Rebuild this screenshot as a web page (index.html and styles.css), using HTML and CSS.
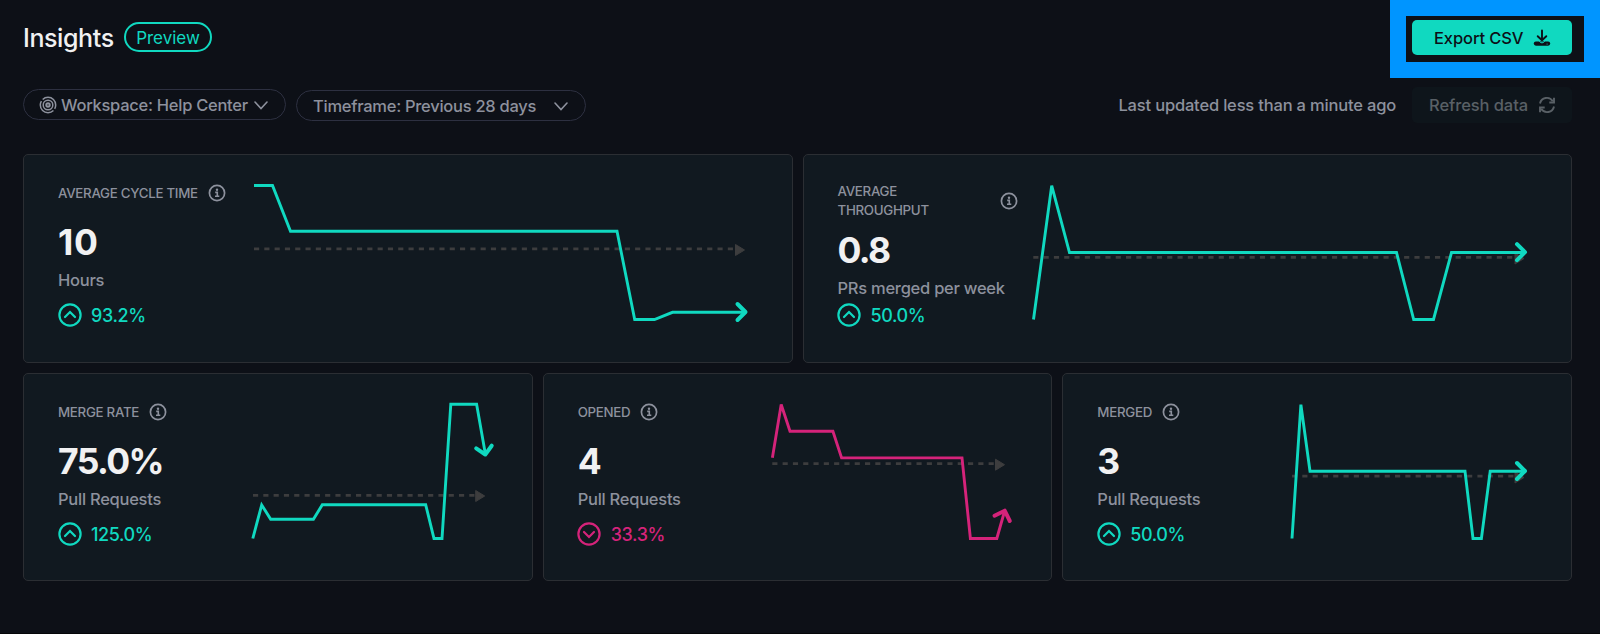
FILE: index.html
```html
<!DOCTYPE html>
<html lang="en">
<head>
<meta charset="utf-8">
<title>Insights</title>
<link rel="stylesheet" href="styles.css">
</head>
<body>
<svg class="defs" width="0" height="0" aria-hidden="true">
  <symbol id="info" viewBox="0 0 18 18"><circle cx="9" cy="9" r="7.6" fill="none" stroke="currentColor" stroke-width="1.7"/><path d="M7.200 8.400h2.100v3.600M7 12.300h4.300" fill="none" stroke="currentColor" stroke-width="1.600"/><circle cx="9" cy="5.700" r="1.200" fill="currentColor"/></symbol>
  <symbol id="up" viewBox="0 0 24 24"><circle cx="12" cy="12" r="10.6" fill="none" stroke="currentColor" stroke-width="2.2"/><path d="M7 14l5-5 5 5" fill="none" stroke="currentColor" stroke-width="2.2" stroke-linecap="round"/></symbol>
  <symbol id="down" viewBox="0 0 24 24"><circle cx="12" cy="12" r="10.6" fill="none" stroke="currentColor" stroke-width="2.2"/><path d="M7 10l5 5 5-5" fill="none" stroke="currentColor" stroke-width="2.2" stroke-linecap="round"/></symbol>
  <symbol id="chevron" viewBox="0 0 14 9"><path d="M1 1l6 6.500L13 1" fill="none" stroke="currentColor" stroke-width="1.600" stroke-linecap="round"/></symbol>
</svg>
<main class="page">
  <header class="header">
    <h1 class="title">Insights</h1>
    <span class="preview">Preview</span>
    <div class="highlight">
      <button class="btn export">Export CSV
        <svg width="18" height="18" viewBox="0 0 18 18" fill="none" stroke="currentColor" stroke-width="1.9" stroke-linecap="round" stroke-linejoin="round"><path d="M9 1.500v9.500M4.700 7.200L9 11.200l4.300-4"/><path d="M2.900 14.600h12.200" stroke-width="4.200"/><path d="M6.500 12.600a2.700 2 0 0 0 5 0" stroke="#10d9c0" stroke-width="1"/><path d="M14 15.100h.2" stroke="#10d9c0" stroke-width=".9"/></svg>
      </button>
    </div>
  </header>
  <section class="filters">
    <button class="pill workspace">
      <svg width="18" height="18" viewBox="0 0 18 18" fill="none" stroke="currentColor" stroke-width="1.500"><circle cx="9" cy="9" r="7.700" stroke-dasharray="22.200 2" stroke-dashoffset="-6"/><circle cx="9" cy="9" r="4.800"/><circle cx="9" cy="9" r="1.700" stroke-width="2"/></svg>
      <span>Workspace: Help Center</span>
      <svg class="chev" width="14" height="9"><use href="#chevron"/></svg>
    </button>
    <button class="pill timeframe"><span>Timeframe: Previous 28 days</span><svg class="chev" width="14" height="9"><use href="#chevron"/></svg></button>
    <span class="updated">Last updated less than a minute ago</span>
    <button class="btn refresh">Refresh data
      <svg width="18" height="18" viewBox="0 0 18 18" fill="none" stroke="currentColor" stroke-width="1.900"><path d="M2 7.500a7 7 0 0 1 12.800-2.300M16 10.500a7 7 0 0 1-12.800 2.300"/><path d="M16 1.800v4.700h-4.700M2 16.200v-4.700h4.700"/></svg>
    </button>
  </section>
  <section class="row two">
    <article class="card">
      <div class="stat">
        <div class="label"><span>AVERAGE CYCLE TIME</span><svg width="18" height="18"><use href="#info"/></svg></div>
        <div class="value whole">10</div><div class="unit">Hours</div>
        <div class="trend up"><svg width="24" height="24"><use href="#up"/></svg><span>93.2%</span></div>
      </div>
      <svg class="chart" viewBox="252 180 496 144" width="496" height="144">
        <path class="base" d="M254 248.800H735"/><path class="tip" d="M735.500 244.500v11l9-5.500z"/>
        <path class="line" d="M254 185.500H272.500L290.500 231.200H617L634.700 319.500H654.500L672.500 312.300H745"/><path class="head" d="M737.500 304l8 8-8 8"/>
      </svg>
    </article>
    <article class="card">
      <div class="stat wrap">
        <div class="label"><span>AVERAGE THROUGHPUT</span><svg width="18" height="18"><use href="#info"/></svg></div>
        <div class="value">0.8</div><div class="unit">PRs merged per week</div>
        <div class="trend up"><svg width="24" height="24"><use href="#up"/></svg><span>50.0%</span></div>
      </div>
      <svg class="chart" viewBox="1032 180 496 144" width="496" height="144">
        <path class="base" d="M1033.300 257.300H1514"/><path class="tip" d="M1515 253v11l9-5.500z"/>
        <path class="line" d="M1033.500 319.500L1051.700 185.700L1069.500 252.500H1396.500L1413.700 319.500H1433.500L1451.500 252.500H1525"/><path class="head" d="M1517 244.200l8 8-8 8"/>
      </svg>
    </article>
  </section>
  <section class="row three">
    <article class="card">
      <div class="stat">
        <div class="label"><span>MERGE RATE</span><svg width="18" height="18"><use href="#info"/></svg></div>
        <div class="value">75.0%</div><div class="unit">Pull Requests</div>
        <div class="trend up"><svg width="24" height="24"><use href="#up"/></svg><span>125.0%</span></div>
      </div>
      <svg class="chart" viewBox="251 399 237 144" width="237" height="144">
        <path class="base" d="M253 495.300H475"/><path class="tip" d="M475.700 490.500v11l9-5.500z"/>
        <path class="line" d="M252.800 538.500L261.700 505L270.700 519.300H313.400L322.300 504.800H425.700L434 538.500H442L450.800 404.200H476.600L485.200 453"/><path class="head" d="M476.200 448.300L485.300 454.500L491.700 445.700"/>
      </svg>
    </article>
    <article class="card">
      <div class="stat">
        <div class="label"><span>OPENED</span><svg width="18" height="18"><use href="#info"/></svg></div>
        <div class="value">4</div><div class="unit">Pull Requests</div>
        <div class="trend down"><svg width="24" height="24"><use href="#down"/></svg><span>33.3%</span></div>
      </div>
      <svg class="chart pink" viewBox="771 399 237 144" width="237" height="144">
        <path class="base" d="M772.300 463.700H995"/><path class="tip" d="M995.500 459.200v11l9-5.500z"/>
        <path class="line" d="M772.400 457.800L781.200 404.500L790 431.200H832.900L841.600 457.900H962L970.400 538.500H996.800L1004.500 511.500"/><path class="head" d="M994.500 515.700L1004.700 510.700L1009.800 521"/>
      </svg>
    </article>
    <article class="card">
      <div class="stat">
        <div class="label"><span>MERGED</span><svg width="18" height="18"><use href="#info"/></svg></div>
        <div class="value">3</div><div class="unit">Pull Requests</div>
        <div class="trend up"><svg width="24" height="24"><use href="#up"/></svg><span>50.0%</span></div>
      </div>
      <svg class="chart" viewBox="1291 399 237 144" width="237" height="144">
        <path class="base" d="M1292 476.200H1514"/><path class="tip" d="M1515 472v11l9-5.500z"/>
        <path class="line" d="M1292 538.500L1300.900 404.700L1310 471.300H1465L1473 538.500H1481.400L1490.200 471.300H1525"/><path class="head" d="M1517 463l8 8-8 8"/>
      </svg>
    </article>
  </section>
</main>
</body>
</html>
```

FILE: styles.css
```css
* { box-sizing: border-box; }
body { margin: 0; background: #0d1017; font-family: Inter, "Liberation Sans", sans-serif; color: #8d919d; }
.defs { display: block; }
button { font: inherit; background: none; border: 0; padding: 0; margin: 0; white-space: nowrap; text-align: left; }
svg { flex: none; }
.page { height: 634px; padding-left: 23px; border-bottom: 1px solid #050608; overflow: hidden; }
.header { display: flex; height: 78px; align-items: flex-start; }
.title { margin: 20px 0 0; width: 101px; font-size: 25px; line-height: 36px; font-weight: 500; color: #f1f1f2; letter-spacing: -0.400px; white-space: nowrap; }
.preview { margin-top: 22px; width: 88px; height: 30px; border: 2px solid #10d9c0; border-radius: 15px; color: #10d9c0; font-size: 17px; line-height: 28px; text-align: center; }
.highlight { margin-left: auto; width: 210px; height: 78px; border: 16px solid #0095ff; padding: 3.500px 0 0 6px; background: #0d1017; }
.btn { display: flex; align-items: center; width: 160px; height: 36px; border-radius: 5px; font-size: 16.500px; font-weight: 500; }
.export { height: 35px; background: #10d9c0; color: #0d1017; padding: 1px 0 0 22px; gap: 10px; letter-spacing: -0.100px; }
.filters { display: flex; height: 76px; padding: 9px 28px 0 0; align-items: flex-start; font-size: 16.500px; font-weight: 500; }
.pill { display: flex; align-items: center; border: 1px solid #2d3041; border-radius: 16px; color: #8d919d; height: 31px; margin-top: 2px; padding-top: 1px; letter-spacing: -0.270px; }
.workspace { width: 263px; padding-left: 15px; }
.workspace span { width: 193px; margin-left: 4px; }
.timeframe { width: 290px; height: 31px; margin: 3px 0 0 10px; padding-left: 16px; }
.timeframe span { width: 241px; }
.updated { margin: 7px 16px 0 auto; line-height: 22px; white-space: nowrap; letter-spacing: -0.180px; }
.refresh { background: #0e151b; color: #596066; padding: 0 0 0 17px; gap: 10px; letter-spacing: -0.080px; }
.row { display: grid; column-gap: 10px; padding-right: 28px; }
.two { grid-template-columns: 1fr 1fr; height: 209px; margin-bottom: 10px; }
.three { grid-template-columns: 1fr 1fr 1fr; height: 208px; }
.card { display: flex; justify-content: space-between; background: #111920; border: 1px solid #2b2e33; border-radius: 5px; padding: 25px 43px 0 34px; }
.stat { white-space: nowrap; }
.label { display: flex; align-items: center; gap: 10px; height: 26px; font-size: 13.300px; font-weight: 500; line-height: 19px; letter-spacing: -0.280px; }
.value { margin-top: 16px; height: 42px; font-size: 35.500px; line-height: 42px; font-weight: 750; color: #f1f1f2; letter-spacing: -1.600px; }
.whole { letter-spacing: 0.800px; }
.unit { margin-top: 5px; font-size: 16.500px; line-height: 22px; font-weight: 500; letter-spacing: -0.260px; }
.trend { display: flex; align-items: center; gap: 9.500px; height: 24px; margin: 12px 0 0 -0.500px; font-size: 18px; font-weight: 500; letter-spacing: -0.400px; }
.up { color: #10d9c0; }
.down { color: #d5237a; }
.wrap .label { width: 180px; height: 42px; justify-content: space-between; white-space: normal; }
.wrap .label span { width: 110px; }
.wrap .value { margin-top: 8px; }
.wrap .trend { margin-top: 4px; }
.chart { overflow: visible; }
.two .card:first-child .chart, .three .card:first-child .chart { margin-right: 1px; }
.line { fill: none; stroke: #10d9c0; stroke-width: 2.900; }
.head { fill: none; stroke: #10d9c0; stroke-width: 4; stroke-linecap: round; stroke-linejoin: round; }
.pink .line, .pink .head { stroke: #d5237a; }
.base { fill: none; stroke: #3d3d3e; stroke-width: 2.800; stroke-dasharray: 5.150 5.150; }
.tip { fill: #3d3d3e; stroke: #3d3d3e; stroke-width: 1; stroke-linejoin: round; }
```
